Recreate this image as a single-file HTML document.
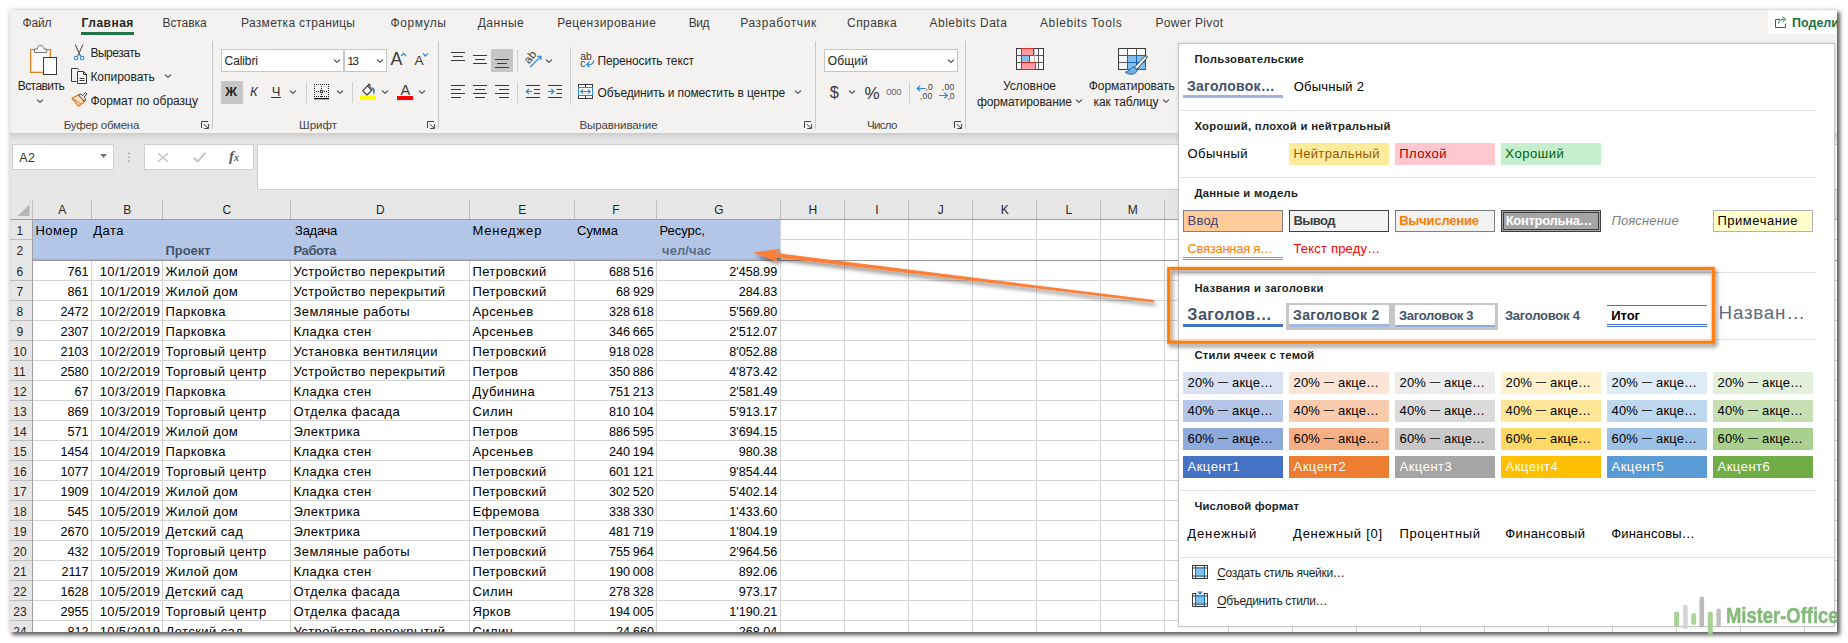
<!DOCTYPE html>
<html lang="ru"><head><meta charset="utf-8"><title>Excel</title><style>
html,body{margin:0;padding:0;background:#fff;}
body{width:1848px;height:643px;overflow:hidden;position:relative;font-family:'Liberation Sans',sans-serif;}
#frame{position:absolute;left:10px;top:10px;width:1827px;height:622px;overflow:hidden;background:#e6e6e6;}
#shadow{position:absolute;left:10px;top:10px;width:1827px;height:622px;box-shadow:2.5px 2.5px 4px 0.5px rgba(0,0,0,.62),0 0 6px 0 rgba(0,0,0,.13);}
#in{position:absolute;left:-10px;top:-10px;width:1848px;height:643px;}
.b{position:absolute;box-sizing:border-box;}
.t{position:absolute;white-space:pre;line-height:20px;color:#222;}
svg{position:absolute;overflow:visible;}
.c{font-size:13px;letter-spacing:0.42px;color:#000;}.r{width:100px;text-align:right;margin-left:0.42px;}.n{font-size:12.6px;letter-spacing:0;margin-left:0;word-spacing:-.6px}.dt{letter-spacing:.3px;margin-left:.3px}</style></head><body><div id="shadow"></div><div id="frame"><div id="in"><div class="b" style="left:10px;top:10px;width:1827px;height:123px;background:#f3f2f1;"></div><div class="b" style="left:10px;top:133px;width:1827px;height:8px;background:linear-gradient(#cbcbcb,#dadada 40%,#e6e6e6);"></div><span class="t" style="top:13px;font-size:12px;left:22.60px;letter-spacing:-0.239px;color:#3b3a39;">Файл</span><span class="t" style="top:13px;font-size:12px;left:81.60px;letter-spacing:0.481px;font-weight:700;color:#252423;">Главная</span><span class="t" style="top:13px;font-size:12px;left:162.50px;letter-spacing:-0.085px;color:#3b3a39;">Вставка</span><span class="t" style="top:13px;font-size:12px;left:241.00px;letter-spacing:0.320px;color:#3b3a39;">Разметка страницы</span><span class="t" style="top:13px;font-size:12px;left:390.60px;letter-spacing:0.530px;color:#3b3a39;">Формулы</span><span class="t" style="top:13px;font-size:12px;left:477.70px;letter-spacing:0.548px;color:#3b3a39;">Данные</span><span class="t" style="top:13px;font-size:12px;left:557.20px;letter-spacing:0.464px;color:#3b3a39;">Рецензирование</span><span class="t" style="top:13px;font-size:12px;left:688.70px;letter-spacing:-0.509px;color:#3b3a39;">Вид</span><span class="t" style="top:13px;font-size:12px;left:740.20px;letter-spacing:0.612px;color:#3b3a39;">Разработчик</span><span class="t" style="top:13px;font-size:12px;left:847.10px;letter-spacing:0.420px;color:#3b3a39;">Справка</span><span class="t" style="top:13px;font-size:12px;left:929.50px;letter-spacing:0.494px;color:#3b3a39;">Ablebits Data</span><span class="t" style="top:13px;font-size:12px;left:1040.00px;letter-spacing:0.606px;color:#3b3a39;">Ablebits Tools</span><span class="t" style="top:13px;font-size:12px;left:1155.40px;letter-spacing:0.367px;color:#3b3a39;">Power Pivot</span><div class="b" style="left:81px;top:32px;width:53px;height:3px;background:#217346;"></div><div class="b" style="left:1768px;top:11px;width:80px;height:22.5px;background:#fff;border-radius:3px;"></div><span class="t" style="top:13px;font-size:12.5px;left:1792.00px;font-weight:700;color:#1e6f42;">Поделиться</span><div class="b" style="left:212px;top:41px;width:1px;height:88px;background:#c8c6c4;"></div><div class="b" style="left:438px;top:41px;width:1px;height:88px;background:#c8c6c4;"></div><div class="b" style="left:815px;top:41px;width:1px;height:88px;background:#c8c6c4;"></div><div class="b" style="left:965px;top:41px;width:1px;height:88px;background:#c8c6c4;"></div><div class="b" style="left:570px;top:47px;width:1px;height:58px;background:#d2d0ce;"></div><div class="b" style="left:306px;top:82px;width:1px;height:21px;background:#d2d0ce;"></div><div class="b" style="left:352px;top:82px;width:1px;height:21px;background:#d2d0ce;"></div><div class="b" style="left:517px;top:82px;width:1px;height:21px;background:#d2d0ce;"></div><div class="b" style="left:909px;top:82px;width:1px;height:21px;background:#d2d0ce;"></div><div class="b" style="left:517px;top:50px;width:1px;height:21px;background:#d2d0ce;"></div><span class="t" style="top:76px;font-size:12px;left:17.70px;letter-spacing:-0.554px;">Вставить</span><span class="t" style="top:43px;font-size:12px;left:90.40px;letter-spacing:-0.454px;">Вырезать</span><span class="t" style="top:67px;font-size:12px;left:90.40px;letter-spacing:-0.025px;">Копировать</span><span class="t" style="top:91px;font-size:12px;left:90.40px;">Формат по образцу</span><span class="t" style="top:115px;font-size:11.5px;left:63.70px;letter-spacing:-0.223px;color:#444;">Буфер обмена</span><span class="t" style="top:115px;font-size:11.5px;left:299.10px;letter-spacing:0.014px;color:#444;">Шрифт</span><span class="t" style="top:115px;font-size:11.5px;left:579.50px;letter-spacing:-0.097px;color:#444;">Выравнивание</span><span class="t" style="top:115px;font-size:11.5px;left:867.10px;letter-spacing:-0.695px;color:#444;">Число</span><div class="b" style="left:221px;top:49px;width:123px;height:23px;background:#fff;border:1px solid #c6c6c6;"></div><div class="b" style="left:344px;top:49px;width:43px;height:23px;background:#fff;border:1px solid #c6c6c6;"></div><span class="t" style="top:51px;font-size:12px;left:224.60px;letter-spacing:-0.103px;">Calibri</span><span class="t" style="top:51px;font-size:11.6px;left:347.60px;letter-spacing:-1.506px;">13</span><div class="b" style="left:221px;top:81px;width:22px;height:23px;background:#c8c6c4;"></div><span class="t" style="top:82px;font-size:13px;left:225.20px;font-weight:700;">Ж</span><span class="t" style="top:82px;font-size:13px;left:250.00px;font-style:italic;color:#333;">К</span><span class="t" style="top:82px;font-size:13px;left:271.80px;color:#333;">Ч</span><div class="b" style="left:271px;top:97px;width:10px;height:1px;background:#333;"></div><div class="b" style="left:491px;top:49px;width:22px;height:23px;background:#c8c6c4;"></div><span class="t" style="top:51px;font-size:12px;left:597.50px;letter-spacing:-0.144px;">Переносить текст</span><span class="t" style="top:83px;font-size:12px;left:597.50px;letter-spacing:-0.138px;">Объединить и поместить в центре</span><div class="b" style="left:824px;top:49px;width:134px;height:23px;background:#fff;border:1px solid #c6c6c6;"></div><span class="t" style="top:51px;font-size:12px;left:827.70px;letter-spacing:0.150px;">Общий</span><span class="t" style="top:82px;font-size:16.4px;left:829.80px;color:#3b3a39;">$</span><span class="t" style="top:84px;font-size:17px;left:864.50px;color:#333;">%</span><span class="t" style="top:82px;font-size:9.5px;left:886.20px;letter-spacing:-0.280px;color:#666;">000</span><span class="t" style="top:76px;font-size:12px;left:1002.90px;letter-spacing:0.017px;">Условное</span><span class="t" style="top:92px;font-size:12px;left:976.90px;letter-spacing:-0.097px;">форматирование</span><span class="t" style="top:76px;font-size:12px;left:1088.80px;letter-spacing:-0.098px;">Форматировать</span><span class="t" style="top:92px;font-size:12px;left:1093.50px;letter-spacing:-0.072px;">как таблицу</span><svg style="left:36.3px;top:98px" width="8" height="6" viewBox="0 0 8 6"><path d="M1 1.65 L4 4.35 L7 1.65" fill="none" stroke="#3b3a39" stroke-width="1.1"/></svg><svg style="left:164.3px;top:73px" width="8" height="6" viewBox="0 0 8 6"><path d="M1 1.65 L4 4.35 L7 1.65" fill="none" stroke="#3b3a39" stroke-width="1.1"/></svg><svg style="left:333px;top:57.8px" width="8" height="6" viewBox="0 0 8 6"><path d="M1 1.65 L4 4.35 L7 1.65" fill="none" stroke="#3b3a39" stroke-width="1.1"/></svg><svg style="left:376px;top:57.8px" width="8" height="6" viewBox="0 0 8 6"><path d="M1 1.65 L4 4.35 L7 1.65" fill="none" stroke="#3b3a39" stroke-width="1.1"/></svg><svg style="left:289.3px;top:89.3px" width="8" height="6" viewBox="0 0 8 6"><path d="M1 1.65 L4 4.35 L7 1.65" fill="none" stroke="#3b3a39" stroke-width="1.1"/></svg><svg style="left:335.5px;top:89.3px" width="8" height="6" viewBox="0 0 8 6"><path d="M1 1.65 L4 4.35 L7 1.65" fill="none" stroke="#3b3a39" stroke-width="1.1"/></svg><svg style="left:381.4px;top:89.3px" width="8" height="6" viewBox="0 0 8 6"><path d="M1 1.65 L4 4.35 L7 1.65" fill="none" stroke="#3b3a39" stroke-width="1.1"/></svg><svg style="left:418px;top:89.3px" width="8" height="6" viewBox="0 0 8 6"><path d="M1 1.65 L4 4.35 L7 1.65" fill="none" stroke="#3b3a39" stroke-width="1.1"/></svg><svg style="left:544.6px;top:57.5px" width="8" height="6" viewBox="0 0 8 6"><path d="M1 1.65 L4 4.35 L7 1.65" fill="none" stroke="#3b3a39" stroke-width="1.1"/></svg><svg style="left:794.4px;top:89.4px" width="8" height="6" viewBox="0 0 8 6"><path d="M1 1.65 L4 4.35 L7 1.65" fill="none" stroke="#3b3a39" stroke-width="1.1"/></svg><svg style="left:947.2px;top:57.8px" width="8" height="6" viewBox="0 0 8 6"><path d="M1 1.65 L4 4.35 L7 1.65" fill="none" stroke="#3b3a39" stroke-width="1.1"/></svg><svg style="left:848.4px;top:89.3px" width="8" height="6" viewBox="0 0 8 6"><path d="M1 1.65 L4 4.35 L7 1.65" fill="none" stroke="#3b3a39" stroke-width="1.1"/></svg><svg style="left:1075px;top:98px" width="8" height="6" viewBox="0 0 8 6"><path d="M1 1.65 L4 4.35 L7 1.65" fill="none" stroke="#3b3a39" stroke-width="1.1"/></svg><svg style="left:1161.8px;top:98px" width="8" height="6" viewBox="0 0 8 6"><path d="M1 1.65 L4 4.35 L7 1.65" fill="none" stroke="#3b3a39" stroke-width="1.1"/></svg><div class="b" style="left:12px;top:144px;width:102px;height:26px;background:#fff;border:1px solid #cfcfcf;"></div><span class="t" style="top:148px;font-size:12.5px;left:19.30px;letter-spacing:0.303px;color:#333;">A2</span><div class="b" style="left:144px;top:144px;width:110px;height:26px;background:#fff;border:1px solid #cfcfcf;"></div><div class="b" style="left:257px;top:144px;width:1600px;height:46px;background:#fff;border:1px solid #cfcfcf;"></div><svg style="left:0;top:0" width="1848" height="643" viewBox="0 0 1848 643"><rect x="30.5" y="49.5" width="20" height="23" fill="#fafafa" stroke="#d87b18" stroke-width="1"/><rect x="31.5" y="50.5" width="18" height="21" fill="none" stroke="#fbd9a5" stroke-width="1.2"/><path d="M34.5 52.5 V49 H37.3 C37.3 46.6 38.7 45.4 40.6 45.4 C42.5 45.4 43.9 46.6 43.9 49 H46.7 V52.5 Z" fill="#f5f5f5" stroke="#797775" stroke-width="1"/><rect x="43.5" y="57.5" width="13" height="17" fill="#fdfdfd" stroke="#3b3a39" stroke-width="1"/><path d="M75.2 44.6 L80.6 56.2 M83 44.6 L77.6 56.2" fill="none" stroke="#5c5b5a" stroke-width="1.1"/><circle cx="76.1" cy="58" r="1.75" fill="none" stroke="#2b88d8" stroke-width="1.1"/><circle cx="82" cy="58" r="1.75" fill="none" stroke="#2b88d8" stroke-width="1.1"/><path d="M76.5 81.5 H71.5 V68.5 H77.5 L79 70" fill="none" stroke="#3b3a39" stroke-width="1"/><path d="M77.5 71.5 H83.5 L86.5 74.5 V83.5 H77.5 Z" fill="#fafafa" stroke="#3b3a39" stroke-width="1"/><path d="M83.5 71.5 V74.5 H86.5 M79.5 78.5 H84.5 M79.5 80.5 H84.5" fill="none" stroke="#3b3a39" stroke-width="1"/><path d="M72 98.3 L79.2 94.6 L84.2 102 L78.4 106.2 Z" fill="#fbe0bd" stroke="#dc7a1c" stroke-width="1.1" stroke-linejoin="round"/><path d="M72.4 98.6 L80.6 103.6" fill="none" stroke="#dc7a1c" stroke-width="1"/><path d="M78.6 95.2 L80.8 94 L82.6 95.6 L85.4 92.6 L87 94 L84.2 97 L85.6 99 L84.4 101.4 Z" fill="#f3f2f1" stroke="#3b3a39" stroke-width="1" stroke-linejoin="round"/><path d="M201.5 128 V121.5 H208 M203.8 124.2 L208.4 128.3 M204.2 128.5 H208.6 V124" fill="none" stroke="#484644" stroke-width="1"/><path d="M427.5 128 V121.5 H434 M429.8 124.2 L434.4 128.3 M430.2 128.5 H434.6 V124" fill="none" stroke="#484644" stroke-width="1"/><path d="M804.5 128 V121.5 H811 M806.8 124.2 L811.4 128.3 M807.2 128.5 H811.6 V124" fill="none" stroke="#484644" stroke-width="1"/><path d="M954.5 128 V121.5 H961 M956.8 124.2 L961.4 128.3 M957.2 128.5 H961.6 V124" fill="none" stroke="#484644" stroke-width="1"/><path d="M401.2 56 L403.6 53.4 L406 56" fill="none" stroke="#2b88d8" stroke-width="1.2"/><path d="M423 53.4 L425.4 56 L427.8 53.4" fill="none" stroke="#2b88d8" stroke-width="1.2"/><path d="M314 84.5h1 M314 96.5h1 M316 84.5h1 M316 96.5h1 M318 84.5h1 M318 96.5h1 M320 84.5h1 M320 96.5h1 M322 84.5h1 M322 96.5h1 M324 84.5h1 M324 96.5h1 M326 84.5h1 M326 96.5h1 M328 84.5h1 M328 96.5h1 M314 86.5h1 M328 86.5h1 M314 88.5h1 M328 88.5h1 M314 90.5h1 M328 90.5h1 M314 92.5h1 M328 92.5h1 M314 94.5h1 M328 94.5h1 M316 91.5h1 M318 91.5h1 M324 91.5h1 M326 91.5h1 M321 86.5h1 M321 88.5h1 M321 94.5h1 M321 96.5h1 " stroke="#222" stroke-width="1" fill="none"/><rect x="320.3" y="90.3" width="2.4" height="2.4" fill="none" stroke="#222" stroke-width=".8"/><rect x="314" y="98" width="15" height="1.3" fill="#111"/><path d="M367.4 85.8 L362.8 90.8 L367 95 L372 90 Z" fill="#f8f8f8" stroke="#3b3a39" stroke-width="1.1" stroke-linejoin="round"/><path d="M368.2 86.6 V85.2 C368.2 83.8 370 83.8 370 85.2 V89.6" fill="none" stroke="#3b3a39" stroke-width="1.1"/><path d="M371.8 87.4 C374.4 88 375 91 373.9 93.8 C373.6 91 373 89.6 371.8 87.4 Z" fill="#1e6fc7" stroke="#1e6fc7" stroke-width=".6"/><rect x="360" y="96" width="16" height="4" fill="#ffff00"/><rect x="397" y="96" width="16" height="4" fill="#ff0000"/><path d="M451 52.5H465 M453 56.5H463 M451 60.5H465 M473 55.5H487 M475 59.5H485 M473 63.5H487 M495 59.5H509 M497 63.5H507 M495 67.5H509 M451 85.5H465 M451 89.5H461 M451 93.5H465 M451 97.5H461 M473 85.5H487 M475 89.5H485 M473 93.5H487 M475 97.5H485 M495 85.5H509 M499 89.5H509 M495 93.5H509 M499 97.5H509 M526 85.5H540 M534 89.5H540 M534 93.5H540 M526 97.5H540 M548 85.5H562 M556.5 89.5H562 M556.5 93.5H562 M548 97.5H562 " stroke="#3b3a39" stroke-width="1" fill="none"/><path d="M532 91.5 H526.6 M529 89 L526.4 91.5 L529 94" fill="none" stroke="#2b88d8" stroke-width="1.2"/><path d="M548 91.5 H553.6 M551.2 89 L553.8 91.5 L551.2 94" fill="none" stroke="#2b88d8" stroke-width="1.2"/><text x="0" y="0" transform="translate(528.9 64.4) rotate(-50)" font-family="Liberation Sans,sans-serif" font-size="11.4" fill="#3b3a39">ab</text><path d="M530.2 67 L540.6 56.6 M537.2 56.3 H540.9 V60" fill="none" stroke="#2b88d8" stroke-width="1.2"/><text x="580.3" y="59.5" font-family="Liberation Sans,sans-serif" font-size="10.4" fill="#3b3a39">ab</text><text x="580.3" y="66.8" font-family="Liberation Sans,sans-serif" font-size="10.4" fill="#3b3a39">c</text><path d="M593.6 60.2 C593.9 63 592.2 64.5 589.6 64.5 H586.8 M589.6 61.8 L586.6 64.5 L589.6 67.2" fill="none" stroke="#2b88d8" stroke-width="1.2"/><rect x="578.5" y="84.5" width="14" height="14" fill="#fafafa" stroke="#3b3a39" stroke-width="1"/><path d="M585.5 84.5 V87.5 M585.5 95.5 V98.5" stroke="#3b3a39" stroke-width="1" fill="none"/><rect x="578.5" y="87.5" width="14" height="8" fill="#fff" stroke="#2b88d8" stroke-width="1"/><path d="M581 91.5 H590 M583 89.4 L580.8 91.5 L583 93.6 M588 89.4 L590.2 91.5 L588 93.6" fill="none" stroke="#2b88d8" stroke-width="1.1"/><text x="925.6" y="90.4" font-family="Liberation Sans,sans-serif" font-size="8.6" fill="#3b3a39">,0</text><text x="920" y="99" font-family="Liberation Sans,sans-serif" font-size="8.6" fill="#3b3a39" textLength="12.4">,00</text><path d="M925.6 88.5 H917.4 M920.2 85.8 L917.2 88.5 L920.2 91.2" fill="none" stroke="#2b88d8" stroke-width="1.2"/><text x="941.8" y="90.4" font-family="Liberation Sans,sans-serif" font-size="8.6" fill="#3b3a39" textLength="12.4">,00</text><text x="947.4" y="99" font-family="Liberation Sans,sans-serif" font-size="8.6" fill="#3b3a39">,0</text><path d="M939 95.5 H947.2 M944.4 92.8 L947.4 95.5 L944.4 98.2" fill="none" stroke="#2b88d8" stroke-width="1.2"/><rect x="1016.5" y="48.5" width="27" height="21" fill="#fbfbfb" stroke="#3b3a39" stroke-width="1"/><path d="M1016.5 55.5 H1043.5 M1016.5 62.5 H1043.5 M1021.5 48.5 V69.5 M1038.5 48.5 V69.5" stroke="#5a5856" stroke-width="1" fill="none"/><path d="M1034.5 49 V69" stroke="#bdbbb9" stroke-width="1" fill="none"/><rect x="1021.5" y="48.5" width="12" height="7" fill="#ff9aa2" stroke="#d92b1a" stroke-width="1"/><rect x="1021.5" y="62.5" width="14" height="7" fill="#ff9aa2" stroke="#d92b1a" stroke-width="1"/><rect x="1021.5" y="56" width="8" height="6" fill="#83bfe8"/><path d="M1021.5 55.5 V62.5 M1029.5 55.5 V62.5" stroke="#1166bb" stroke-width="1"/><rect x="1118.5" y="48.5" width="27" height="21" fill="#fbfbfb" stroke="#3b3a39" stroke-width="1"/><path d="M1118.5 55.5 H1145.5 M1118.5 62.5 H1145.5 M1127.5 48.5 V69.5 M1136.5 48.5 V69.5" stroke="#5a5856" stroke-width="1" fill="none"/><rect x="1127.5" y="55.5" width="18" height="14" fill="#83bfe8" stroke="#1166bb" stroke-width="1"/><path d="M1127.5 62.5 H1145.5 M1136.5 55.5 V69.5" stroke="#1166bb" stroke-width="1" fill="none"/><path d="M1134.4 67.2 L1145 56.4 C1146.4 55 1148 56.4 1146.8 58 L1136.8 69.4 Z" fill="#fff" stroke="#3b3a39" stroke-width="1" stroke-linejoin="round"/><path d="M1134.2 67 C1130.4 66.8 1130 71.6 1125.4 72.2 C1129 75.6 1137.6 74.6 1137 69.4 Z" fill="#6fb1e4" stroke="#1166bb" stroke-width="1" stroke-linejoin="round"/><path d="M1780 19.5 H1775.5 V27.5 H1785.5 V23.5" fill="none" stroke="#217346" stroke-width="1"/><path d="M1778.4 23.6 C1778.8 20.6 1781 19.2 1784 19.2 M1782.4 16.8 L1785.8 19.2 L1782.8 21.8" fill="none" stroke="#217346" stroke-width="1"/><path d="M100 154 H107 L103.5 158 Z" fill="#767676"/><path d="M128 152.5 h2 v1.7 h-2 Z M128 156.4 h2 v1.7 h-2 Z M128 160.3 h2 v1.7 h-2 Z" fill="#b3b3b3"/><path d="M158 153.2 L168 161.8 M168 153.2 L158 161.8" stroke="#bcbcbc" stroke-width="1.2" fill="none"/><path d="M193.6 157.8 L197.6 161.4 L205.4 152.8" stroke="#c3c3c3" stroke-width="2" fill="none"/><text x="229" y="161" font-family="Liberation Serif,serif" font-style="italic" font-weight="700" font-size="15" fill="#5a5a5a">f</text><text x="234" y="161" font-family="Liberation Serif,serif" font-style="italic" font-weight="700" font-size="10" fill="#5a5a5a">x</text></svg><span class="t" style="top:49px;font-size:17.8px;left:390.60px;color:#3b3a39;">A</span><span class="t" style="top:51px;font-size:13.6px;left:414.60px;color:#3b3a39;">A</span><span class="t" style="top:80px;font-size:14.6px;left:400.40px;color:#3b3a39;">A</span><div class="b" style="left:33px;top:220px;width:1815px;height:423px;background:#fff;"></div><div class="b" style="left:33px;top:220px;width:748px;height:40px;background:#b4c6e7;"></div><div class="b" style="left:33px;top:259px;width:748px;height:1px;background:#9db3de;"></div><div class="b" style="left:33px;top:261px;width:1815px;height:382px;background:repeating-linear-gradient(to bottom,transparent 0,transparent 19px,#d4d4d4 19px,#d4d4d4 20px);"></div><div class="b" style="left:781px;top:239px;width:1067px;height:1px;background:#d4d4d4;"></div><div class="b" style="left:91px;top:261px;width:1px;height:382px;background:#d4d4d4;"></div><div class="b" style="left:162px;top:261px;width:1px;height:382px;background:#d4d4d4;"></div><div class="b" style="left:290px;top:261px;width:1px;height:382px;background:#d4d4d4;"></div><div class="b" style="left:469px;top:261px;width:1px;height:382px;background:#d4d4d4;"></div><div class="b" style="left:574px;top:261px;width:1px;height:382px;background:#d4d4d4;"></div><div class="b" style="left:656px;top:261px;width:1px;height:382px;background:#d4d4d4;"></div><div class="b" style="left:780px;top:261px;width:1px;height:382px;background:#d4d4d4;"></div><div class="b" style="left:844px;top:220px;width:1px;height:423px;background:#d4d4d4;"></div><div class="b" style="left:908px;top:220px;width:1px;height:423px;background:#d4d4d4;"></div><div class="b" style="left:972px;top:220px;width:1px;height:423px;background:#d4d4d4;"></div><div class="b" style="left:1036px;top:220px;width:1px;height:423px;background:#d4d4d4;"></div><div class="b" style="left:1100px;top:220px;width:1px;height:423px;background:#d4d4d4;"></div><div class="b" style="left:1164px;top:220px;width:1px;height:423px;background:#d4d4d4;"></div><div class="b" style="left:1228px;top:220px;width:1px;height:423px;background:#d4d4d4;"></div><div class="b" style="left:1292px;top:220px;width:1px;height:423px;background:#d4d4d4;"></div><div class="b" style="left:1356px;top:220px;width:1px;height:423px;background:#d4d4d4;"></div><div class="b" style="left:1420px;top:220px;width:1px;height:423px;background:#d4d4d4;"></div><div class="b" style="left:1484px;top:220px;width:1px;height:423px;background:#d4d4d4;"></div><div class="b" style="left:1548px;top:220px;width:1px;height:423px;background:#d4d4d4;"></div><div class="b" style="left:1612px;top:220px;width:1px;height:423px;background:#d4d4d4;"></div><div class="b" style="left:1676px;top:220px;width:1px;height:423px;background:#d4d4d4;"></div><div class="b" style="left:1740px;top:220px;width:1px;height:423px;background:#d4d4d4;"></div><div class="b" style="left:1804px;top:220px;width:1px;height:423px;background:#d4d4d4;"></div><div class="b" style="left:780px;top:220px;width:1px;height:41px;background:#d4d4d4;"></div><div class="b" style="left:10px;top:260px;width:1838px;height:1px;background:#9a9a9a;"></div><div class="b" style="left:10px;top:200px;width:1838px;height:20px;background:#e6e6e6;"></div><div class="b" style="left:10px;top:219px;width:1838px;height:1px;background:#a0a0a0;"></div><div class="b" style="left:32px;top:200px;width:1px;height:19px;background:#bcbcbc;"></div><div class="b" style="left:91px;top:200px;width:1px;height:19px;background:#bcbcbc;"></div><div class="b" style="left:162px;top:200px;width:1px;height:19px;background:#bcbcbc;"></div><div class="b" style="left:290px;top:200px;width:1px;height:19px;background:#bcbcbc;"></div><div class="b" style="left:469px;top:200px;width:1px;height:19px;background:#bcbcbc;"></div><div class="b" style="left:574px;top:200px;width:1px;height:19px;background:#bcbcbc;"></div><div class="b" style="left:656px;top:200px;width:1px;height:19px;background:#bcbcbc;"></div><div class="b" style="left:780px;top:200px;width:1px;height:19px;background:#bcbcbc;"></div><div class="b" style="left:844px;top:200px;width:1px;height:19px;background:#bcbcbc;"></div><div class="b" style="left:908px;top:200px;width:1px;height:19px;background:#bcbcbc;"></div><div class="b" style="left:972px;top:200px;width:1px;height:19px;background:#bcbcbc;"></div><div class="b" style="left:1036px;top:200px;width:1px;height:19px;background:#bcbcbc;"></div><div class="b" style="left:1100px;top:200px;width:1px;height:19px;background:#bcbcbc;"></div><div class="b" style="left:1164px;top:200px;width:1px;height:19px;background:#bcbcbc;"></div><div class="b" style="left:1228px;top:200px;width:1px;height:19px;background:#bcbcbc;"></div><div class="b" style="left:1292px;top:200px;width:1px;height:19px;background:#bcbcbc;"></div><div class="b" style="left:1356px;top:200px;width:1px;height:19px;background:#bcbcbc;"></div><div class="b" style="left:1420px;top:200px;width:1px;height:19px;background:#bcbcbc;"></div><div class="b" style="left:1484px;top:200px;width:1px;height:19px;background:#bcbcbc;"></div><div class="b" style="left:1548px;top:200px;width:1px;height:19px;background:#bcbcbc;"></div><div class="b" style="left:1612px;top:200px;width:1px;height:19px;background:#bcbcbc;"></div><div class="b" style="left:1676px;top:200px;width:1px;height:19px;background:#bcbcbc;"></div><div class="b" style="left:1740px;top:200px;width:1px;height:19px;background:#bcbcbc;"></div><div class="b" style="left:1804px;top:200px;width:1px;height:19px;background:#bcbcbc;"></div><svg style="left:17px;top:204px" width="13" height="13" viewBox="0 0 13 13"><path d="M12.5 0.5 L12.5 12 L0.5 12 Z" fill="#b5b5b5"/></svg><span class="t" style="left:42.3px;top:200px;width:40px;text-align:center;font-size:12px;color:#262626">A</span><span class="t" style="left:107.3px;top:200px;width:40px;text-align:center;font-size:12px;color:#262626">B</span><span class="t" style="left:206.8px;top:200px;width:40px;text-align:center;font-size:12px;color:#262626">C</span><span class="t" style="left:360.3px;top:200px;width:40px;text-align:center;font-size:12px;color:#262626">D</span><span class="t" style="left:502.3px;top:200px;width:40px;text-align:center;font-size:12px;color:#262626">E</span><span class="t" style="left:595.8px;top:200px;width:40px;text-align:center;font-size:12px;color:#262626">F</span><span class="t" style="left:698.8px;top:200px;width:40px;text-align:center;font-size:12px;color:#262626">G</span><span class="t" style="left:792.8px;top:200px;width:40px;text-align:center;font-size:12px;color:#262626">H</span><span class="t" style="left:856.8px;top:200px;width:40px;text-align:center;font-size:12px;color:#262626">I</span><span class="t" style="left:920.8px;top:200px;width:40px;text-align:center;font-size:12px;color:#262626">J</span><span class="t" style="left:984.8px;top:200px;width:40px;text-align:center;font-size:12px;color:#262626">K</span><span class="t" style="left:1048.8px;top:200px;width:40px;text-align:center;font-size:12px;color:#262626">L</span><span class="t" style="left:1112.8px;top:200px;width:40px;text-align:center;font-size:12px;color:#262626">M</span><div class="b" style="left:10px;top:220px;width:23px;height:423px;background:#e6e6e6;"></div><div class="b" style="left:32px;top:220px;width:1px;height:423px;background:#a0a0a0;"></div><div class="b" style="left:10px;top:239px;width:22px;height:1px;background:#bdbdbd;"></div><div class="b" style="left:10px;top:261px;width:22px;height:382px;background:repeating-linear-gradient(to bottom,transparent 0,transparent 19px,#bdbdbd 19px,#bdbdbd 20px);"></div><span class="t" style="top:221px;font-size:12px;left:16.56px;color:#262626;">1</span><span class="t" style="top:241px;font-size:12px;left:16.56px;color:#262626;">2</span><span class="t" style="top:221px;font-size:13px;left:35.50px;letter-spacing:0.471px;color:#000;">Номер</span><span class="t" style="top:221px;font-size:13px;left:93.30px;letter-spacing:0.434px;color:#000;">Дата</span><span class="t" style="top:221px;font-size:13px;left:295.10px;letter-spacing:-0.285px;color:#000;">Задача</span><span class="t" style="top:221px;font-size:13px;left:472.40px;letter-spacing:0.846px;color:#000;">Менеджер</span><span class="t" style="top:221px;font-size:13px;left:577.00px;letter-spacing:0.060px;color:#000;">Сумма</span><span class="t" style="top:221px;font-size:13px;left:659.40px;letter-spacing:0.011px;color:#000;">Ресурс,</span><span class="t" style="top:241px;font-size:13px;left:165.60px;letter-spacing:-0.069px;font-weight:700;color:#44546a;">Проект</span><span class="t" style="top:241px;font-size:13px;left:293.50px;letter-spacing:-0.397px;font-weight:700;color:#44546a;">Работа</span><span class="t" style="top:241px;font-size:13px;left:662.00px;letter-spacing:0.107px;font-weight:700;color:#5b6b84;">чел/час</span><span class="t" style="top:262px;font-size:12px;left:16.56px;color:#262626;">6</span><span class="t c r n" style="left:-11.400000000000006px;top:262px;">761</span><span class="t c r dt" style="left:60.099999999999994px;top:262px;">10/1/2019</span><span class="t c r n" style="left:553.9px;top:262px;">688 516</span><span class="t c r n" style="left:677.3px;top:262px;">2&#x27;458.99</span><span class="t c" style="left:165.6px;top:262px;">Жилой дом</span><span class="t c" style="left:293.5px;top:262px;">Устройство перекрытий</span><span class="t c" style="left:472.4px;top:262px;">Петровский</span><span class="t" style="top:282px;font-size:12px;left:16.56px;color:#262626;">7</span><span class="t c r n" style="left:-11.400000000000006px;top:282px;">861</span><span class="t c r dt" style="left:60.099999999999994px;top:282px;">10/1/2019</span><span class="t c r n" style="left:553.9px;top:282px;">68 929</span><span class="t c r n" style="left:677.3px;top:282px;">284.83</span><span class="t c" style="left:165.6px;top:282px;">Жилой дом</span><span class="t c" style="left:293.5px;top:282px;">Устройство перекрытий</span><span class="t c" style="left:472.4px;top:282px;">Петровский</span><span class="t" style="top:302px;font-size:12px;left:16.56px;color:#262626;">8</span><span class="t c r n" style="left:-11.400000000000006px;top:302px;">2472</span><span class="t c r dt" style="left:60.099999999999994px;top:302px;">10/2/2019</span><span class="t c r n" style="left:553.9px;top:302px;">328 618</span><span class="t c r n" style="left:677.3px;top:302px;">5&#x27;569.80</span><span class="t c" style="left:165.6px;top:302px;">Парковка</span><span class="t c" style="left:293.5px;top:302px;">Земляные работы</span><span class="t c" style="left:472.4px;top:302px;">Арсеньев</span><span class="t" style="top:322px;font-size:12px;left:16.56px;color:#262626;">9</span><span class="t c r n" style="left:-11.400000000000006px;top:322px;">2307</span><span class="t c r dt" style="left:60.099999999999994px;top:322px;">10/2/2019</span><span class="t c r n" style="left:553.9px;top:322px;">346 665</span><span class="t c r n" style="left:677.3px;top:322px;">2&#x27;512.07</span><span class="t c" style="left:165.6px;top:322px;">Парковка</span><span class="t c" style="left:293.5px;top:322px;">Кладка стен</span><span class="t c" style="left:472.4px;top:322px;">Арсеньев</span><span class="t" style="top:342px;font-size:12px;left:13.23px;color:#262626;">10</span><span class="t c r n" style="left:-11.400000000000006px;top:342px;">2103</span><span class="t c r dt" style="left:60.099999999999994px;top:342px;">10/2/2019</span><span class="t c r n" style="left:553.9px;top:342px;">918 028</span><span class="t c r n" style="left:677.3px;top:342px;">8&#x27;052.88</span><span class="t c" style="left:165.6px;top:342px;">Торговый центр</span><span class="t c" style="left:293.5px;top:342px;">Установка вентиляции</span><span class="t c" style="left:472.4px;top:342px;">Петровский</span><span class="t" style="top:362px;font-size:12px;left:13.23px;color:#262626;">11</span><span class="t c r n" style="left:-11.400000000000006px;top:362px;">2580</span><span class="t c r dt" style="left:60.099999999999994px;top:362px;">10/2/2019</span><span class="t c r n" style="left:553.9px;top:362px;">350 886</span><span class="t c r n" style="left:677.3px;top:362px;">4&#x27;873.42</span><span class="t c" style="left:165.6px;top:362px;">Торговый центр</span><span class="t c" style="left:293.5px;top:362px;">Устройство перекрытий</span><span class="t c" style="left:472.4px;top:362px;">Петров</span><span class="t" style="top:382px;font-size:12px;left:13.23px;color:#262626;">12</span><span class="t c r n" style="left:-11.400000000000006px;top:382px;">67</span><span class="t c r dt" style="left:60.099999999999994px;top:382px;">10/3/2019</span><span class="t c r n" style="left:553.9px;top:382px;">751 213</span><span class="t c r n" style="left:677.3px;top:382px;">2&#x27;581.49</span><span class="t c" style="left:165.6px;top:382px;">Парковка</span><span class="t c" style="left:293.5px;top:382px;">Кладка стен</span><span class="t c" style="left:472.4px;top:382px;">Дубинина</span><span class="t" style="top:402px;font-size:12px;left:13.23px;color:#262626;">13</span><span class="t c r n" style="left:-11.400000000000006px;top:402px;">869</span><span class="t c r dt" style="left:60.099999999999994px;top:402px;">10/3/2019</span><span class="t c r n" style="left:553.9px;top:402px;">810 104</span><span class="t c r n" style="left:677.3px;top:402px;">5&#x27;913.17</span><span class="t c" style="left:165.6px;top:402px;">Торговый центр</span><span class="t c" style="left:293.5px;top:402px;">Отделка фасада</span><span class="t c" style="left:472.4px;top:402px;">Силин</span><span class="t" style="top:422px;font-size:12px;left:13.23px;color:#262626;">14</span><span class="t c r n" style="left:-11.400000000000006px;top:422px;">571</span><span class="t c r dt" style="left:60.099999999999994px;top:422px;">10/4/2019</span><span class="t c r n" style="left:553.9px;top:422px;">886 595</span><span class="t c r n" style="left:677.3px;top:422px;">3&#x27;694.15</span><span class="t c" style="left:165.6px;top:422px;">Жилой дом</span><span class="t c" style="left:293.5px;top:422px;">Электрика</span><span class="t c" style="left:472.4px;top:422px;">Петров</span><span class="t" style="top:442px;font-size:12px;left:13.23px;color:#262626;">15</span><span class="t c r n" style="left:-11.400000000000006px;top:442px;">1454</span><span class="t c r dt" style="left:60.099999999999994px;top:442px;">10/4/2019</span><span class="t c r n" style="left:553.9px;top:442px;">240 194</span><span class="t c r n" style="left:677.3px;top:442px;">980.38</span><span class="t c" style="left:165.6px;top:442px;">Парковка</span><span class="t c" style="left:293.5px;top:442px;">Кладка стен</span><span class="t c" style="left:472.4px;top:442px;">Арсеньев</span><span class="t" style="top:462px;font-size:12px;left:13.23px;color:#262626;">16</span><span class="t c r n" style="left:-11.400000000000006px;top:462px;">1077</span><span class="t c r dt" style="left:60.099999999999994px;top:462px;">10/4/2019</span><span class="t c r n" style="left:553.9px;top:462px;">601 121</span><span class="t c r n" style="left:677.3px;top:462px;">9&#x27;854.44</span><span class="t c" style="left:165.6px;top:462px;">Торговый центр</span><span class="t c" style="left:293.5px;top:462px;">Кладка стен</span><span class="t c" style="left:472.4px;top:462px;">Петровский</span><span class="t" style="top:482px;font-size:12px;left:13.23px;color:#262626;">17</span><span class="t c r n" style="left:-11.400000000000006px;top:482px;">1909</span><span class="t c r dt" style="left:60.099999999999994px;top:482px;">10/4/2019</span><span class="t c r n" style="left:553.9px;top:482px;">302 520</span><span class="t c r n" style="left:677.3px;top:482px;">5&#x27;402.14</span><span class="t c" style="left:165.6px;top:482px;">Жилой дом</span><span class="t c" style="left:293.5px;top:482px;">Кладка стен</span><span class="t c" style="left:472.4px;top:482px;">Петровский</span><span class="t" style="top:502px;font-size:12px;left:13.23px;color:#262626;">18</span><span class="t c r n" style="left:-11.400000000000006px;top:502px;">545</span><span class="t c r dt" style="left:60.099999999999994px;top:502px;">10/5/2019</span><span class="t c r n" style="left:553.9px;top:502px;">338 330</span><span class="t c r n" style="left:677.3px;top:502px;">1&#x27;433.60</span><span class="t c" style="left:165.6px;top:502px;">Жилой дом</span><span class="t c" style="left:293.5px;top:502px;">Электрика</span><span class="t c" style="left:472.4px;top:502px;">Ефремова</span><span class="t" style="top:522px;font-size:12px;left:13.23px;color:#262626;">19</span><span class="t c r n" style="left:-11.400000000000006px;top:522px;">2670</span><span class="t c r dt" style="left:60.099999999999994px;top:522px;">10/5/2019</span><span class="t c r n" style="left:553.9px;top:522px;">481 719</span><span class="t c r n" style="left:677.3px;top:522px;">1&#x27;804.19</span><span class="t c" style="left:165.6px;top:522px;">Детский сад</span><span class="t c" style="left:293.5px;top:522px;">Электрика</span><span class="t c" style="left:472.4px;top:522px;">Петровский</span><span class="t" style="top:542px;font-size:12px;left:13.23px;color:#262626;">20</span><span class="t c r n" style="left:-11.400000000000006px;top:542px;">432</span><span class="t c r dt" style="left:60.099999999999994px;top:542px;">10/5/2019</span><span class="t c r n" style="left:553.9px;top:542px;">755 964</span><span class="t c r n" style="left:677.3px;top:542px;">2&#x27;964.56</span><span class="t c" style="left:165.6px;top:542px;">Торговый центр</span><span class="t c" style="left:293.5px;top:542px;">Земляные работы</span><span class="t c" style="left:472.4px;top:542px;">Петровский</span><span class="t" style="top:562px;font-size:12px;left:13.23px;color:#262626;">21</span><span class="t c r n" style="left:-11.400000000000006px;top:562px;">2117</span><span class="t c r dt" style="left:60.099999999999994px;top:562px;">10/5/2019</span><span class="t c r n" style="left:553.9px;top:562px;">190 008</span><span class="t c r n" style="left:677.3px;top:562px;">892.06</span><span class="t c" style="left:165.6px;top:562px;">Жилой дом</span><span class="t c" style="left:293.5px;top:562px;">Кладка стен</span><span class="t c" style="left:472.4px;top:562px;">Петровский</span><span class="t" style="top:582px;font-size:12px;left:13.23px;color:#262626;">22</span><span class="t c r n" style="left:-11.400000000000006px;top:582px;">1628</span><span class="t c r dt" style="left:60.099999999999994px;top:582px;">10/5/2019</span><span class="t c r n" style="left:553.9px;top:582px;">278 328</span><span class="t c r n" style="left:677.3px;top:582px;">973.17</span><span class="t c" style="left:165.6px;top:582px;">Детский сад</span><span class="t c" style="left:293.5px;top:582px;">Отделка фасада</span><span class="t c" style="left:472.4px;top:582px;">Силин</span><span class="t" style="top:602px;font-size:12px;left:13.23px;color:#262626;">23</span><span class="t c r n" style="left:-11.400000000000006px;top:602px;">2955</span><span class="t c r dt" style="left:60.099999999999994px;top:602px;">10/5/2019</span><span class="t c r n" style="left:553.9px;top:602px;">194 005</span><span class="t c r n" style="left:677.3px;top:602px;">1&#x27;190.21</span><span class="t c" style="left:165.6px;top:602px;">Торговый центр</span><span class="t c" style="left:293.5px;top:602px;">Отделка фасада</span><span class="t c" style="left:472.4px;top:602px;">Ярков</span><span class="t" style="top:622px;font-size:12px;left:13.23px;color:#262626;">24</span><span class="t c r n" style="left:-11.400000000000006px;top:622px;">812</span><span class="t c r dt" style="left:60.099999999999994px;top:622px;">10/5/2019</span><span class="t c r n" style="left:553.9px;top:622px;">24 660</span><span class="t c r n" style="left:677.3px;top:622px;">268.04</span><span class="t c" style="left:165.6px;top:622px;">Детский сад</span><span class="t c" style="left:293.5px;top:622px;">Устройство перекрытий</span><span class="t c" style="left:472.4px;top:622px;">Силин</span><div class="b" style="left:1178px;top:43px;width:657px;height:584px;background:#fff;border:1px solid #c6c4c2;box-shadow:0 0 4px rgba(0,0,0,.10);"></div><div class="b" style="left:1180px;top:110px;width:1636px;height:1px;background:#e1e1e1;width:636px;"></div><div class="b" style="left:1180px;top:177px;width:1636px;height:1px;background:#e1e1e1;width:636px;"></div><div class="b" style="left:1180px;top:272px;width:1636px;height:1px;background:#e1e1e1;width:636px;"></div><div class="b" style="left:1180px;top:339px;width:1636px;height:1px;background:#e1e1e1;width:636px;"></div><div class="b" style="left:1180px;top:490px;width:1636px;height:1px;background:#e1e1e1;width:636px;"></div><div class="b" style="left:1180px;top:557px;width:654px;height:1px;background:#e1e1e1;"></div><span class="t" style="top:49px;font-size:11.3px;left:1194.40px;letter-spacing:0.281px;font-weight:700;color:#201f1e;">Пользовательские</span><span class="t" style="top:116px;font-size:11.3px;left:1194.40px;letter-spacing:0.307px;font-weight:700;color:#201f1e;">Хороший, плохой и нейтральный</span><span class="t" style="top:183px;font-size:11.3px;left:1194.40px;letter-spacing:0.273px;font-weight:700;color:#201f1e;">Данные и модель</span><span class="t" style="top:278px;font-size:11.3px;left:1194.40px;letter-spacing:0.307px;font-weight:700;color:#201f1e;">Названия и заголовки</span><span class="t" style="top:345px;font-size:11.3px;left:1194.40px;letter-spacing:0.236px;font-weight:700;color:#201f1e;">Стили ячеек с темой</span><span class="t" style="top:496px;font-size:11.3px;left:1194.40px;letter-spacing:0.165px;font-weight:700;color:#201f1e;">Числовой формат</span><span class="t" style="top:76px;font-size:14px;left:1187.00px;letter-spacing:0.227px;font-weight:700;color:#44546a;">Заголовок…</span><div class="b" style="left:1183px;top:95px;width:100px;height:3px;background:#9fb3de;"></div><span class="t" style="top:77px;font-size:13px;left:1293.70px;letter-spacing:0.248px;color:#000;">Обычный 2</span><span class="t" style="top:144px;font-size:13px;left:1187.50px;letter-spacing:0.439px;color:#000;">Обычный</span><div class="b" style="left:1289px;top:143px;width:100px;height:22px;background:#ffeb9c;"></div><span class="t" style="top:144px;font-size:13px;left:1293.40px;letter-spacing:0.356px;color:#9c5700;">Нейтральный</span><div class="b" style="left:1395px;top:143px;width:100px;height:22px;background:#ffc7ce;"></div><span class="t" style="top:144px;font-size:13px;left:1399.20px;letter-spacing:0.457px;color:#9c0006;">Плохой</span><div class="b" style="left:1501px;top:143px;width:100px;height:22px;background:#c6efce;"></div><span class="t" style="top:144px;font-size:13px;left:1505.30px;letter-spacing:0.555px;color:#006100;">Хороший</span><div class="b" style="left:1183px;top:210px;width:100px;height:22px;background:#ffcc99;border:1px solid #7f7f7f;"></div><span class="t" style="top:211px;font-size:13px;left:1187.50px;letter-spacing:0.244px;color:#3f3f76;">Ввод</span><div class="b" style="left:1289px;top:210px;width:100px;height:22px;background:#f2f2f2;border:1px solid #3f3f3f;"></div><span class="t" style="top:211px;font-size:13px;left:1293.40px;letter-spacing:-0.536px;font-weight:700;color:#3f3f3f;">Вывод</span><div class="b" style="left:1395px;top:210px;width:100px;height:22px;background:#f2f2f2;border:1px solid #7f7f7f;"></div><span class="t" style="top:211px;font-size:13px;left:1399.20px;letter-spacing:-0.206px;font-weight:700;color:#fa7d00;">Вычисление</span><div class="b" style="left:1501px;top:210px;width:100px;height:22px;background:#a5a5a5;border:3px double #3f3f3f;"></div><span class="t" style="top:211px;font-size:13px;left:1505.70px;letter-spacing:-0.308px;font-weight:700;color:#fff;">Контрольна…</span><span class="t" style="top:211px;font-size:13px;left:1611.50px;letter-spacing:0.173px;font-style:italic;color:#7f7f7f;">Пояснение</span><div class="b" style="left:1713px;top:210px;width:100px;height:22px;background:#ffffcc;border:1px solid #b2b2b2;"></div><span class="t" style="top:211px;font-size:13px;left:1717.40px;letter-spacing:0.539px;color:#000;">Примечание</span><span class="t" style="top:239px;font-size:13px;left:1187.50px;letter-spacing:-0.288px;color:#fa7d00;">Связанная я…</span><div class="b" style="left:1183px;top:257px;width:100px;height:3px;border-top:1px solid #ff8001;border-bottom:1px solid #ff8001;"></div><span class="t" style="top:239px;font-size:13px;left:1293.40px;letter-spacing:0.196px;color:#ff0000;">Текст преду…</span><span class="t" style="top:304px;font-size:16.2px;left:1187.30px;letter-spacing:0.448px;font-weight:700;color:#44546a;">Заголов…</span><div class="b" style="left:1183px;top:324px;width:100px;height:3px;background:#4472c4;"></div><div class="b" style="left:1286px;top:302.5px;width:212px;height:27.5px;background:#c6c6c6;"></div><div class="b" style="left:1289px;top:305px;width:100px;height:22px;background:#fff;"></div><div class="b" style="left:1289px;top:324px;width:100px;height:3px;background:#a2b8e1;"></div><span class="t" style="top:305px;font-size:14px;left:1293.10px;letter-spacing:0.277px;font-weight:700;color:#44546a;">Заголовок 2</span><div class="b" style="left:1395px;top:305px;width:100px;height:22px;background:#fff;"></div><div class="b" style="left:1395px;top:325px;width:100px;height:1.5px;background:#8ea9db;"></div><span class="t" style="top:306px;font-size:13px;left:1399.00px;letter-spacing:-0.278px;font-weight:700;color:#44546a;">Заголовок 3</span><span class="t" style="top:306px;font-size:13px;left:1504.90px;letter-spacing:-0.237px;font-weight:700;color:#44546a;">Заголовок 4</span><div class="b" style="left:1607px;top:305px;width:100px;height:1px;background:#4472c4;"></div><div class="b" style="left:1607px;top:324px;width:100px;height:3px;border-top:1px solid #4472c4;border-bottom:1px solid #4472c4;"></div><span class="t" style="top:306px;font-size:13px;left:1611.30px;letter-spacing:-0.069px;font-weight:700;color:#000;">Итог</span><span class="t" style="top:303px;font-size:18.8px;left:1718.60px;letter-spacing:0.770px;color:#5b6a80;">Назван…</span><div class="b" style="left:1183px;top:372px;width:100px;height:22px;background:#d9e1f2;"></div><span class="t" style="top:373px;font-size:13px;left:1187.50px;letter-spacing:0.151px;color:#000;">20% <i style="font-style:normal;font-size:10.4px;vertical-align:1.6px;line-height:0">—</i> акце…</span><div class="b" style="left:1183px;top:400px;width:100px;height:22px;background:#b4c6e7;"></div><span class="t" style="top:401px;font-size:13px;left:1187.50px;letter-spacing:0.151px;color:#000;">40% <i style="font-style:normal;font-size:10.4px;vertical-align:1.6px;line-height:0">—</i> акце…</span><div class="b" style="left:1183px;top:428px;width:100px;height:22px;background:#8ea9db;"></div><span class="t" style="top:429px;font-size:13px;left:1187.50px;letter-spacing:0.151px;color:#000;">60% <i style="font-style:normal;font-size:10.4px;vertical-align:1.6px;line-height:0">—</i> акце…</span><div class="b" style="left:1183px;top:456px;width:100px;height:22px;background:#4472c4;"></div><span class="t" style="top:457px;font-size:13px;left:1187.50px;letter-spacing:0.506px;color:#fff;">Акцент1</span><div class="b" style="left:1289px;top:372px;width:100px;height:22px;background:#fce4d6;"></div><span class="t" style="top:373px;font-size:13px;left:1293.50px;letter-spacing:0.151px;color:#000;">20% <i style="font-style:normal;font-size:10.4px;vertical-align:1.6px;line-height:0">—</i> акце…</span><div class="b" style="left:1289px;top:400px;width:100px;height:22px;background:#f8cbad;"></div><span class="t" style="top:401px;font-size:13px;left:1293.50px;letter-spacing:0.151px;color:#000;">40% <i style="font-style:normal;font-size:10.4px;vertical-align:1.6px;line-height:0">—</i> акце…</span><div class="b" style="left:1289px;top:428px;width:100px;height:22px;background:#f4b084;"></div><span class="t" style="top:429px;font-size:13px;left:1293.50px;letter-spacing:0.151px;color:#000;">60% <i style="font-style:normal;font-size:10.4px;vertical-align:1.6px;line-height:0">—</i> акце…</span><div class="b" style="left:1289px;top:456px;width:100px;height:22px;background:#ed7d31;"></div><span class="t" style="top:457px;font-size:13px;left:1293.50px;letter-spacing:0.506px;color:#fff;">Акцент2</span><div class="b" style="left:1395px;top:372px;width:100px;height:22px;background:#ededed;"></div><span class="t" style="top:373px;font-size:13px;left:1399.50px;letter-spacing:0.151px;color:#000;">20% <i style="font-style:normal;font-size:10.4px;vertical-align:1.6px;line-height:0">—</i> акце…</span><div class="b" style="left:1395px;top:400px;width:100px;height:22px;background:#dbdbdb;"></div><span class="t" style="top:401px;font-size:13px;left:1399.50px;letter-spacing:0.151px;color:#000;">40% <i style="font-style:normal;font-size:10.4px;vertical-align:1.6px;line-height:0">—</i> акце…</span><div class="b" style="left:1395px;top:428px;width:100px;height:22px;background:#c9c9c9;"></div><span class="t" style="top:429px;font-size:13px;left:1399.50px;letter-spacing:0.151px;color:#000;">60% <i style="font-style:normal;font-size:10.4px;vertical-align:1.6px;line-height:0">—</i> акце…</span><div class="b" style="left:1395px;top:456px;width:100px;height:22px;background:#a5a5a5;"></div><span class="t" style="top:457px;font-size:13px;left:1399.50px;letter-spacing:0.506px;color:#fff;">Акцент3</span><div class="b" style="left:1501px;top:372px;width:100px;height:22px;background:#fff2cc;"></div><span class="t" style="top:373px;font-size:13px;left:1505.50px;letter-spacing:0.151px;color:#000;">20% <i style="font-style:normal;font-size:10.4px;vertical-align:1.6px;line-height:0">—</i> акце…</span><div class="b" style="left:1501px;top:400px;width:100px;height:22px;background:#ffe699;"></div><span class="t" style="top:401px;font-size:13px;left:1505.50px;letter-spacing:0.151px;color:#000;">40% <i style="font-style:normal;font-size:10.4px;vertical-align:1.6px;line-height:0">—</i> акце…</span><div class="b" style="left:1501px;top:428px;width:100px;height:22px;background:#ffd966;"></div><span class="t" style="top:429px;font-size:13px;left:1505.50px;letter-spacing:0.151px;color:#000;">60% <i style="font-style:normal;font-size:10.4px;vertical-align:1.6px;line-height:0">—</i> акце…</span><div class="b" style="left:1501px;top:456px;width:100px;height:22px;background:#ffc000;"></div><span class="t" style="top:457px;font-size:13px;left:1505.50px;letter-spacing:0.506px;color:#fff;">Акцент4</span><div class="b" style="left:1607px;top:372px;width:100px;height:22px;background:#ddebf7;"></div><span class="t" style="top:373px;font-size:13px;left:1611.50px;letter-spacing:0.151px;color:#000;">20% <i style="font-style:normal;font-size:10.4px;vertical-align:1.6px;line-height:0">—</i> акце…</span><div class="b" style="left:1607px;top:400px;width:100px;height:22px;background:#bdd7ee;"></div><span class="t" style="top:401px;font-size:13px;left:1611.50px;letter-spacing:0.151px;color:#000;">40% <i style="font-style:normal;font-size:10.4px;vertical-align:1.6px;line-height:0">—</i> акце…</span><div class="b" style="left:1607px;top:428px;width:100px;height:22px;background:#9bc2e6;"></div><span class="t" style="top:429px;font-size:13px;left:1611.50px;letter-spacing:0.151px;color:#000;">60% <i style="font-style:normal;font-size:10.4px;vertical-align:1.6px;line-height:0">—</i> акце…</span><div class="b" style="left:1607px;top:456px;width:100px;height:22px;background:#5b9bd5;"></div><span class="t" style="top:457px;font-size:13px;left:1611.50px;letter-spacing:0.506px;color:#fff;">Акцент5</span><div class="b" style="left:1713px;top:372px;width:100px;height:22px;background:#e2efda;"></div><span class="t" style="top:373px;font-size:13px;left:1717.50px;letter-spacing:0.151px;color:#000;">20% <i style="font-style:normal;font-size:10.4px;vertical-align:1.6px;line-height:0">—</i> акце…</span><div class="b" style="left:1713px;top:400px;width:100px;height:22px;background:#c6e0b4;"></div><span class="t" style="top:401px;font-size:13px;left:1717.50px;letter-spacing:0.151px;color:#000;">40% <i style="font-style:normal;font-size:10.4px;vertical-align:1.6px;line-height:0">—</i> акце…</span><div class="b" style="left:1713px;top:428px;width:100px;height:22px;background:#a9d08e;"></div><span class="t" style="top:429px;font-size:13px;left:1717.50px;letter-spacing:0.151px;color:#000;">60% <i style="font-style:normal;font-size:10.4px;vertical-align:1.6px;line-height:0">—</i> акце…</span><div class="b" style="left:1713px;top:456px;width:100px;height:22px;background:#70ad47;"></div><span class="t" style="top:457px;font-size:13px;left:1717.50px;letter-spacing:0.506px;color:#fff;">Акцент6</span><span class="t" style="top:524px;font-size:13px;left:1187.20px;letter-spacing:0.917px;color:#000;">Денежный</span><span class="t" style="top:524px;font-size:13px;left:1293.10px;letter-spacing:0.741px;color:#000;">Денежный [0]</span><span class="t" style="top:524px;font-size:13px;left:1399.50px;letter-spacing:0.582px;color:#000;">Процентный</span><span class="t" style="top:524px;font-size:13px;left:1505.20px;letter-spacing:0.408px;color:#000;">Финансовый</span><span class="t" style="top:524px;font-size:13px;left:1611.20px;letter-spacing:0.193px;color:#000;">Финансовы…</span><svg style="left:0;top:0" width="1848" height="643"><rect x="1192.5" y="565.5" width="15" height="13" fill="#fff" stroke="#3b3a39" stroke-width="1"/><path d="M1195.5 565.5 V578.5 M1204.5 565.5 V578.5 M1192.5 568.0 H1207.5 M1192.5 576.0 H1207.5" stroke="#3b3a39" stroke-width="1" fill="none"/><rect x="1195.5" y="568.0" width="9" height="8" fill="#83bfe8" stroke="#106ebe" stroke-width="1"/><path d="M1196.5 593.5 H1192.5 V606.5 H1207.5 V593.5 H1203.5" fill="#fff" stroke="#3b3a39" stroke-width="1"/><path d="M1197 591.5 H1203 L1200 594.9 Z" fill="#2b88d8"/><path d="M1195.5 593.5 V606.5 M1204.5 593.5 V606.5 M1192.5 596.0 H1207.5 M1192.5 604.0 H1207.5" stroke="#3b3a39" stroke-width="1" fill="none"/><rect x="1195.5" y="596.0" width="9" height="8" fill="#83bfe8" stroke="#106ebe" stroke-width="1"/></svg><span class="t" style="top:563px;font-size:12px;left:1217.20px;letter-spacing:-0.311px;color:#201f1e;">Создать стиль ячейки…</span><div class="b" style="left:1217px;top:578.5px;width:8px;height:1px;background:#201f1e;"></div><span class="t" style="top:591px;font-size:12px;left:1217.20px;letter-spacing:-0.334px;color:#201f1e;">Объединить стили…</span><div class="b" style="left:1217px;top:606.5px;width:9px;height:1px;background:#201f1e;"></div><svg id="ann" style="left:0;top:0" width="1848" height="643" viewBox="0 0 1848 643"><defs><filter id="ds" x="-5%" y="-20%" width="110%" height="150%"><feGaussianBlur in="SourceAlpha" stdDeviation="2.1"/><feOffset dx="2.4" dy="3"/><feComponentTransfer><feFuncA type="linear" slope="0.5"/></feComponentTransfer><feMerge><feMergeNode/><feMergeNode in="SourceGraphic"/></feMerge></filter></defs><g filter="url(#ds)"><polygon points="753.1,252.4 780.6,248.7 775.7,253.1 1154.2,300.1 1153.8,302.5 775.2,257.2 778.9,262.6" fill="#fb7f38"/><rect x="1168.7" y="268.4" width="544.6" height="73.8" fill="none" stroke="#fe7f08" stroke-width="3.2"/></g></svg></div></div><svg style="left:0;top:0" width="1848" height="643"><rect x="1674.1" y="611.4" width="5" height="15.4" rx="2.5" fill="#9fd08c" opacity=".92"/><rect x="1683.0" y="604.4" width="4.8" height="24.9" rx="2.4" fill="#d2d2d2" opacity=".92"/><rect x="1691.2" y="612.9" width="5" height="12.0" rx="2.5" fill="#a3d490" opacity=".92"/><rect x="1699.5" y="596.5" width="4.6" height="30.8" rx="2.3" fill="#b4b4b4" opacity=".92"/><rect x="1707.8" y="611.4" width="5" height="23.9" rx="2.5" fill="#9fd08c" opacity=".92"/><rect x="1716.4" y="608.4" width="4.4" height="18.9" rx="2.2" fill="#b9b9b9" opacity=".92"/></svg><span class="t" style="left:1726.3px;top:601px;font-size:22.4px;font-weight:700;line-height:30px;color:#6fae63;opacity:.84;transform-origin:0 0;transform:scaleX(.822);-webkit-text-stroke:.5px #6fae63">Mister-Office</span></body></html>
